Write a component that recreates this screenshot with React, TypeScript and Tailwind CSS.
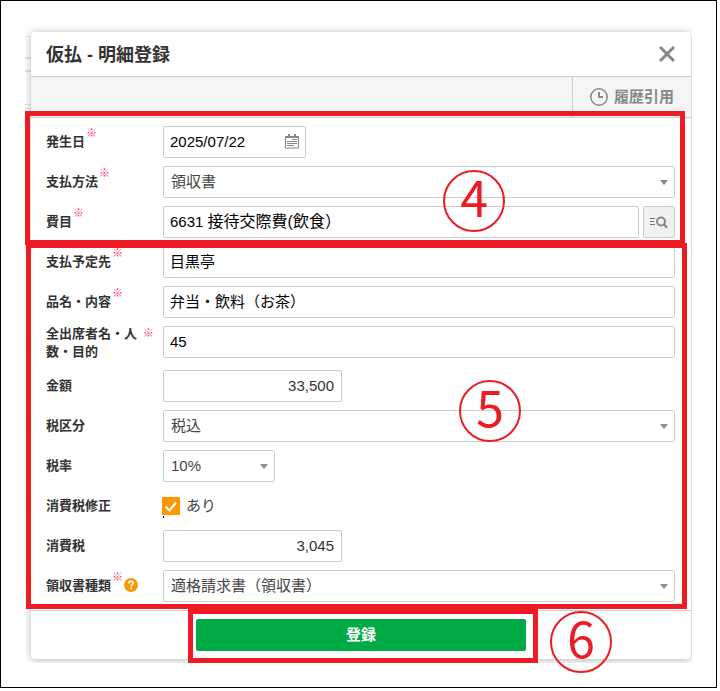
import React from 'react';
import { clsx } from 'clsx';

interface RowProps {
  label: React.ReactNode;
  required?: boolean;
  help?: boolean;
  tall?: boolean;
  children: React.ReactNode;
}

function Required({ className }: { className?: string }) {
  return <span className={clsx('text-[11px] leading-none font-medium text-[#f8395f]', className)}>※</span>;
}

function HelpIcon() {
  return (
    <svg width="14" height="14" viewBox="0 0 14 14" fill="none">
      <circle cx="7" cy="7" r="7" fill="#ff9800" />
      <path d="M4.9 5.4C4.9 4.1 5.8 3.4 7 3.4s2.2.7 2.2 1.8c0 1.5-2 1.5-2 3.2" stroke="#fff" strokeWidth="1.7" />
      <path d="M6.3 9.4h1.8v1.7H6.3z" fill="#fff" />
    </svg>
  );
}

function Row({ label, required, help, tall, children }: RowProps) {
  return (
    <div className={clsx('flex items-start', tall ? 'h-9' : 'h-8')}>
      <div
        className={clsx(
          'flex w-[117px] shrink-0 items-start text-[13px] font-bold whitespace-nowrap text-[#333]',
          tall ? '-mt-px leading-[18px]' : 'leading-8'
        )}
      >
        <span>{label}</span>
        {required && <Required className={tall ? 'mt-[3px] ml-1.5' : 'mt-0.5 ml-px'} />}
        {help && (
          <span className="mt-2 ml-px">
            <HelpIcon />
          </span>
        )}
      </div>
      {children}
    </div>
  );
}

function Field({ className, children }: { className?: string; children: React.ReactNode }) {
  return (
    <div className={clsx('flex h-8 items-center rounded-[2px] border border-[#ccc] bg-white pl-1.5 text-[15px]', className)}>
      {children}
    </div>
  );
}

function Select({ className, children }: { className?: string; children: React.ReactNode }) {
  return (
    <Field className={clsx('justify-between pr-1.5 text-[#444]', className)}>
      <span className="pl-px">{children}</span>
      <svg width="8" height="5" viewBox="0 0 8 5">
        <path d="M0 0h8L4 5z" fill="#888" />
      </svg>
    </Field>
  );
}

function CalendarIcon() {
  return (
    <svg width="14" height="15" viewBox="0 0 14 15" fill="none" stroke="#888" className="-mt-0.5">
      <path d="M.5 2.5h13v11.500H.5z" />
      <path d="M0 3h14" strokeWidth="2" />
      <path d="M4 0v3M10 0v3" strokeWidth="2" />
      <path d="M7 5.500h5M2 7.500h10M2 9.500h10M2 11.500h7" />
    </svg>
  );
}

function SearchListIcon() {
  return (
    <svg width="18" height="13" viewBox="0 0 18 13" fill="none" stroke="#888">
      <path d="M0 2.500h5M0 5.500h4M0 8.500h5" stroke="#777" />
      <circle cx="11" cy="5.500" r="4" strokeWidth="2" />
      <path d="M14 8.500l3 3.200" strokeWidth="2.400" />
    </svg>
  );
}

function Marker({ className, children }: { className: string; children: React.ReactNode }) {
  return (
    <div
      className={clsx(
        'absolute flex h-[62px] w-[62px] items-center justify-center rounded-full border-2 border-[#ed1c24] pb-3 text-[50px] leading-none text-[#ed1c24] [font-family:"Noto_Sans_CJK_JP",sans-serif]',
        className
      )}
    >
      {children}
    </div>
  );
}

export default function App() {
  return (
    <div className="relative h-[688px] w-[717px] overflow-hidden border border-black bg-white [font-family:'Liberation_Sans','Noto_Sans_CJK_JP',sans-serif]">
      <div className="mt-[25px] ml-6 flex h-[637px] w-[667px] overflow-hidden">
        {/* edges of the page behind the dialog */}
        <div className="w-1.5 shrink-0 pt-[10px]">
          <div className="h-[21px] border-t border-[#eee]" />
          <div className="h-[13px] border-t-2 border-[#e4e4e4]" />
          <div className="h-[34px] border-t-2 border-[#e4e4e4]" />
          <div className="h-[5px] border-y border-[#e4e4e4]" />
        </div>

        <div className="mt-1.5 flex h-[627px] w-[660px] shrink-0 flex-col rounded-[4px] bg-white shadow-[0_1px_8px_rgba(0,0,0,0.3)]">
          <div className="flex h-[45px] shrink-0 items-center justify-between border-b border-[#ccc] pr-4 pl-[15px]">
            <h2 className="pt-px text-[18px] leading-none font-bold text-[#333]">仮払 - 明細登録</h2>
            <svg width="16" height="16" viewBox="0 0 16 16" stroke="#888" strokeWidth="3">
              <path d="M1 1l14 14M15 1L1 15" />
            </svg>
          </div>

          <div className="flex h-[41px] shrink-0 justify-end border-b border-[#ccc] bg-[#f5f5f5]">
            <div className="flex w-[119px] items-center gap-[6px] border-l border-[#ccc] pl-[17px] text-[15px] font-bold text-[#888]">
              <svg width="18" height="18" viewBox="0 0 18 18" fill="none" stroke="#888">
                <circle cx="9" cy="9" r="8.200" strokeWidth="1.500" />
                <path d="M9 4v5h4" strokeWidth="2" />
              </svg>
              <span>履歴引用</span>
            </div>
          </div>

          <div className="flex flex-col gap-2 py-2 pr-4 pl-[15px]">
            <Row label="発生日" required>
              <Field className="w-[143px] justify-between pr-1.5 text-black">
                <span>2025/07/22</span>
                <CalendarIcon />
              </Field>
            </Row>
            <Row label="支払方法" required>
              <Select className="w-[512px]">領収書</Select>
            </Row>
            <Row label="費目" required>
              <Field className="w-[476px] text-black">
                <span>
                  6631 <span className="text-[16px]">接待交際費(飲食）</span>
                </span>
              </Field>
              <div className="ml-1 flex h-8 w-8 items-center justify-center rounded-[2px] border border-[#ccc] bg-[#f0f0f0]">
                <SearchListIcon />
              </div>
            </Row>
            <Row label="支払予定先" required>
              <Field className="w-[512px] text-black">目黒亭</Field>
            </Row>
            <Row label="品名・内容" required>
              <Field className="w-[512px] text-black">弁当・飲料（お茶）</Field>
            </Row>
            <Row
              label={
                <>
                  全出席者名・人
                  <br />
                  数・目的
                </>
              }
              required
              tall
            >
              <Field className="w-[512px] text-black">45</Field>
            </Row>
            <Row label="金額">
              <Field className="w-[179px] justify-end pr-[7px] text-[#333]">33,500</Field>
            </Row>
            <Row label="税区分">
              <Select className="w-[512px]">税込</Select>
            </Row>
            <Row label="税率">
              <Select className="w-[112px]">10%</Select>
            </Row>
            <Row label="消費税修正">
              <div className="-ml-px flex h-8 items-center gap-[6px] text-[15px] text-[#444]">
                <svg width="18" height="18" viewBox="0 0 18 18" fill="none">
                  <rect width="18" height="18" rx="1" fill="#ff9800" />
                  <path d="M3.500 9.500l4 4 6.500-8" stroke="#fff" strokeWidth="2" />
                </svg>
                <span>あり</span>
              </div>
            </Row>
            <Row label="消費税">
              <Field className="w-[179px] justify-end pr-[7px] text-[#333]">3,045</Field>
            </Row>
            <Row label="領収書種類" required help>
              <Select className="w-[512px]">適格請求書（領収書）</Select>
            </Row>
          </div>

          <div className="flex flex-1 items-start justify-center border-t border-[#ccc] pt-2">
            <button className="h-8 w-[330px] rounded-[2px] bg-[#00aa44] text-[15px] font-bold text-white">登録</button>
          </div>
        </div>
      </div>

      {/* step annotations */}
      <div className="absolute top-[110px] left-6 h-[134px] w-[660px] border-5 border-[#ed1c24]" />
      <div className="absolute top-[239px] left-6 h-[5px] w-[660px] bg-[#ed1c24]" />
      <div className="absolute top-[242px] left-[25px] h-[366px] w-[661px] border-5 border-[#ed1c24]" />
      <div className="absolute top-[608px] left-[187px] h-[54px] w-[350px] border-5 border-[#ed1c24]" />
      <div className="absolute top-[515px] left-[162px] h-0.5 w-px bg-black" />
      <Marker className="top-[169px] left-[442px]">4</Marker>
      <Marker className="top-[379px] left-[458px]">5</Marker>
      <Marker className="top-[610px] left-[549px]">6</Marker>
    </div>
  );
}
